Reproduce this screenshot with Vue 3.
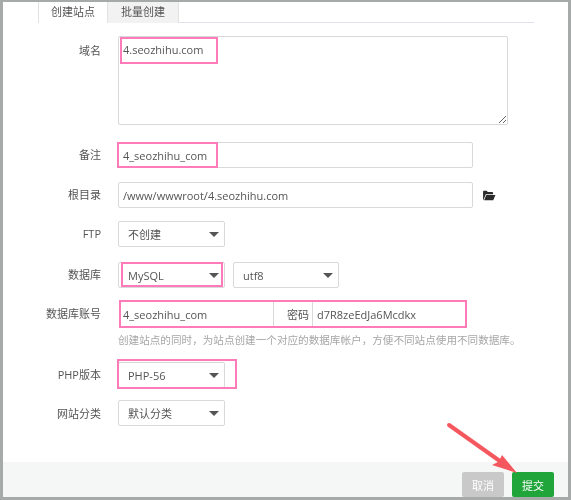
<template>
  <div class="window">
    <div class="tabs">
      <div class="tab active">创建站点</div>
      <div class="tab">批量创建</div>
    </div>

    <div class="form">
      <div class="row row-domain">
        <label class="label">域名</label>
        <div class="marked">
          <textarea class="field area" readonly :value="domain"></textarea>
          <span class="mark mark-domain"></span>
        </div>
      </div>

      <div class="row row-note">
        <label class="label">备注</label>
        <div class="marked">
          <input class="field wide" readonly :value="name" />
          <span class="mark mark-note"></span>
        </div>
      </div>

      <div class="row row-root">
        <label class="label">根目录</label>
        <input class="field wide" readonly :value="root" />
        <svg class="folder" viewBox="0 0 16 13" width="14" height="11">
          <path fill="#2b2b2b" d="M1 12V2.2C1 1.5 1.5 1 2.2 1h3l1.3 1.4h5.2c.7 0 1.1.4 1.1 1.1V5H4.2L1.7 11.3 1 12z" />
          <path fill="#2b2b2b" d="M4.8 5.9H15.6L13 12H2.2z" />
        </svg>
      </div>

      <div class="row row-ftp">
        <label class="label">FTP</label>
        <div class="select">不创建</div>
      </div>

      <div class="row row-db">
        <label class="label">数据库</label>
        <div class="marked">
          <div class="select">MySQL</div>
          <span class="mark mark-db"></span>
        </div>
        <div class="select charset">utf8</div>
      </div>

      <div class="row row-account">
        <label class="label">数据库账号</label>
        <div class="marked group">
          <input class="group-input user" readonly :value="name" />
          <span class="addon">密码</span>
          <input class="group-input pass" readonly value="d7R8zeEdJa6Mcdkx" />
          <span class="mark mark-account"></span>
        </div>
      </div>

      <p class="hint">创建站点的同时，为站点创建一个对应的数据库帐户，方便不同站点使用不同数据库。</p>

      <div class="row row-php">
        <label class="label">PHP版本</label>
        <div class="marked">
          <div class="select">PHP-56</div>
          <span class="mark mark-php"></span>
        </div>
      </div>

      <div class="row row-cat">
        <label class="label">网站分类</label>
        <div class="select">默认分类</div>
      </div>
    </div>

    <div class="footer">
      <button class="btn cancel">取消</button>
      <button class="btn submit">提交</button>
    </div>

    <svg class="arrow" viewBox="0 0 80 60" width="80" height="60">
      <path d="M5 4 L60 43" stroke="#f4575d" stroke-width="4" stroke-linecap="round" fill="none" />
      <path d="M73 52 L48 44 L54 41 L56 38 L58 34z" fill="#f4575d" />
    </svg>
  </div>
</template>

<script setup>
const domain = '4.seozhihu.com'
const name = '4_seozhihu_com'
const root = '/www/wwwroot/4.seozhihu.com'
</script>

<style>
html, body { margin: 0; background: #a6aba9; }
</style>

<style scoped>
.window {
  position: relative;
  box-sizing: border-box;
  width: 571px;
  height: 500px;
  display: flex;
  flex-direction: column;
  border-style: solid;
  border-color: #a6aba9;
  border-width: 2px 3px 3px 3px;
  background: #fff;
  font: 11px "Open Sans", "Noto Sans CJK SC", sans-serif;
  color: #555;
  overflow: hidden;
  filter: blur(0.3px);
}
.tabs {
  display: flex;
  height: 20px;
  margin: 0 34px 0 35px;
  border-bottom: 1px solid #e2e2ea;
}
.tab {
  box-sizing: border-box;
  width: 71px;
  height: 21px;
  line-height: 19px;
  text-align: center;
  background: #f2f2f2;
  border-right: 1px solid #e2e2e2;
}
.tab.active {
  width: 70px;
  background: #fff;
  border-left: 1px solid #e2e2e2;
  border-right: 1px solid #e2e2e2;
}
.form { flex: 1; padding-top: 13px; }
.row { display: flex; align-items: flex-start; }
.label {
  width: 98px;
  margin-right: 17px;
  flex: none;
  text-align: right;
  line-height: 26px;
  color: #555;
}
.row-domain .label { padding-top: 2px; }
.marked { position: relative; display: flex; }
.field {
  box-sizing: border-box;
  border: 1px solid #d9d9d9;
  border-radius: 2px;
  font: inherit;
  color: #555;
  padding: 0 4px;
  outline: none;
  display: block;
}
.area {
  width: 390px;
  height: 89px;
  padding: 5px 4px;
  line-height: 15px;
  resize: both;
  box-shadow: none;
}
.wide { width: 355px; height: 26px; }
.row-note { margin-top: 17px; }
.row-root { margin-top: 14px; }
.row-ftp { margin-top: 13px; }
.row-db { margin-top: 15px; }
.row-account { margin-top: 13px; }
.row-php { margin-top: 14px; }
.row-cat { margin-top: 12px; }
.row-cat .label { line-height: 28px; }
.folder { margin: 8px 0 0 9px; }
.select {
  position: relative;
  box-sizing: border-box;
  width: 107px;
  height: 26px;
  line-height: 25px;
  padding-left: 9px;
  border: 1px solid #d9d9d9;
  border-radius: 2px;
  background: #fff;
}
.select::after {
  content: "";
  position: absolute;
  right: 5px;
  top: 10px;
  border-style: solid;
  border-width: 5px 5px 0 5px;
  border-color: #555 transparent transparent transparent;
}
.charset { margin-left: 8px; width: 106px; }
.group {
  box-sizing: border-box;
  width: 348px;
  height: 27px;
  margin-left: 1px;
  border: 1px solid #d9d9d9;
}
.group-input {
  box-sizing: border-box;
  border: 0;
  height: 25px;
  font: inherit;
  color: #555;
  padding: 0 4px;
  outline: none;
}
.user { width: 153px; padding-left: 3px; }
.pass { width: 153px; }
.addon {
  box-sizing: border-box;
  width: 40px;
  padding-left: 13px;
  line-height: 25px;
  border-left: 1px solid #d9d9d9;
  border-right: 1px solid #d9d9d9;
}
.hint {
  margin: 4px 0 0 115px;
  line-height: 16px;
  font-size: 10.6px;
  color: #a6a6a6;
  white-space: nowrap;
}
.mark {
  position: absolute;
  box-sizing: border-box;
  border: 2px solid #ff7ab8;
  pointer-events: none;
}
.mark-domain { left: 2px; top: 1px; width: 98px; height: 27px; }
.mark-note { left: -1px; top: 0; width: 101px; height: 26px; }
.mark-db { left: 3px; top: 0; width: 102px; height: 25px; }
.mark-account { left: -1px; top: -2px; width: 348px; height: 28px; }
.mark-php { left: -1px; top: -3px; width: 120px; height: 30px; }
.footer {
  display: flex;
  justify-content: flex-end;
  gap: 8px;
  height: 35px;
  padding: 10px 14px 0 0;
  box-sizing: border-box;
  background: #f5f7f7;
}
.btn {
  width: 42px;
  height: 25px;
  border: 0;
  border-radius: 2px;
  color: #fff;
  font: inherit;
  padding: 0;
}
.cancel { background: #c9c9c9; }
.submit { background: #20a53a; }
.arrow { position: absolute; left: 441px; top: 419px; pointer-events: none; }
</style>
